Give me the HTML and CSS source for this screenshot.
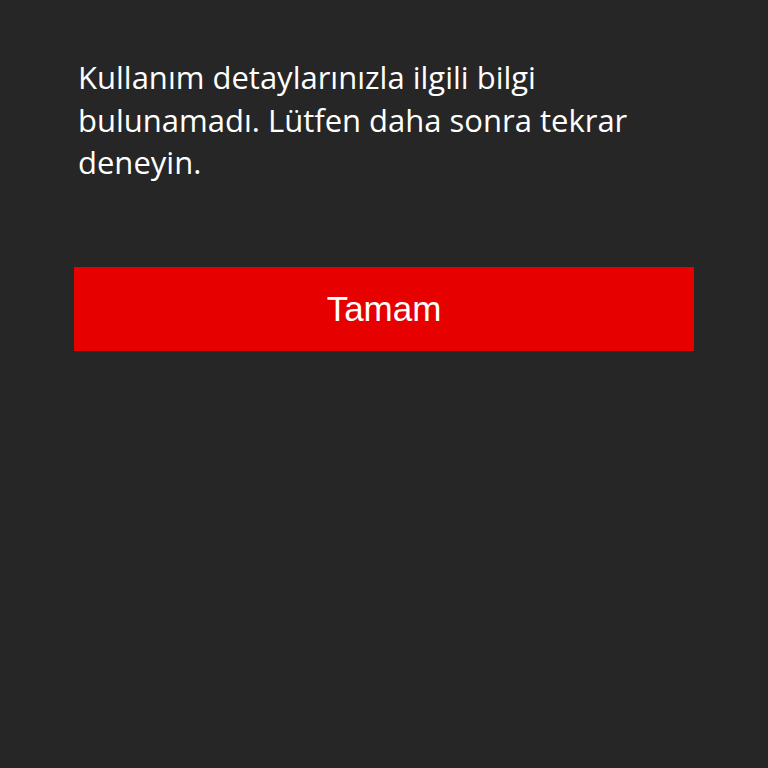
FILE: index.html
```html
<!doctype html>
<html lang="tr">

<head>
    <meta charset="UTF-8">
    <meta name="viewport" content="width=device-width, initial-scale=1.0">
    <title>Kullanım detayları</title>
    <link rel="stylesheet" href="styles.css">
</head>

<body>
    <div class="wrapper">
        <p class="message">Kullanım detaylarınızla ilgili bilgi bulunamadı. Lütfen daha sonra tekrar deneyin.</p>
        <button class="okButton">Tamam</button>
    </div>
</body>

</html>
```

FILE: styles.css
```css
* {
    margin: 0;
    padding: 0;
    box-sizing: border-box;
}

html,
body {
    height: 100%;
}

body {
    background-color: #262626;
    color: #ffffff;
    font-family: 'Open Sans', 'Noto Sans', sans-serif;
}

.wrapper {
    display: flex;
    flex-direction: column;
    padding: 56px 74px 0;
}

.message {
    font-size: 31px;
    line-height: 42.5px;
    padding-left: 4px;
    padding-right: 60px;
}

.okButton {
    margin-top: 83px;
    height: 84px;
    width: 100%;
    border: none;
    background-color: #e60000;
    color: #ffffff;
    font-family: 'Liberation Sans', Arial, sans-serif;
    font-size: 35px;
}
```
